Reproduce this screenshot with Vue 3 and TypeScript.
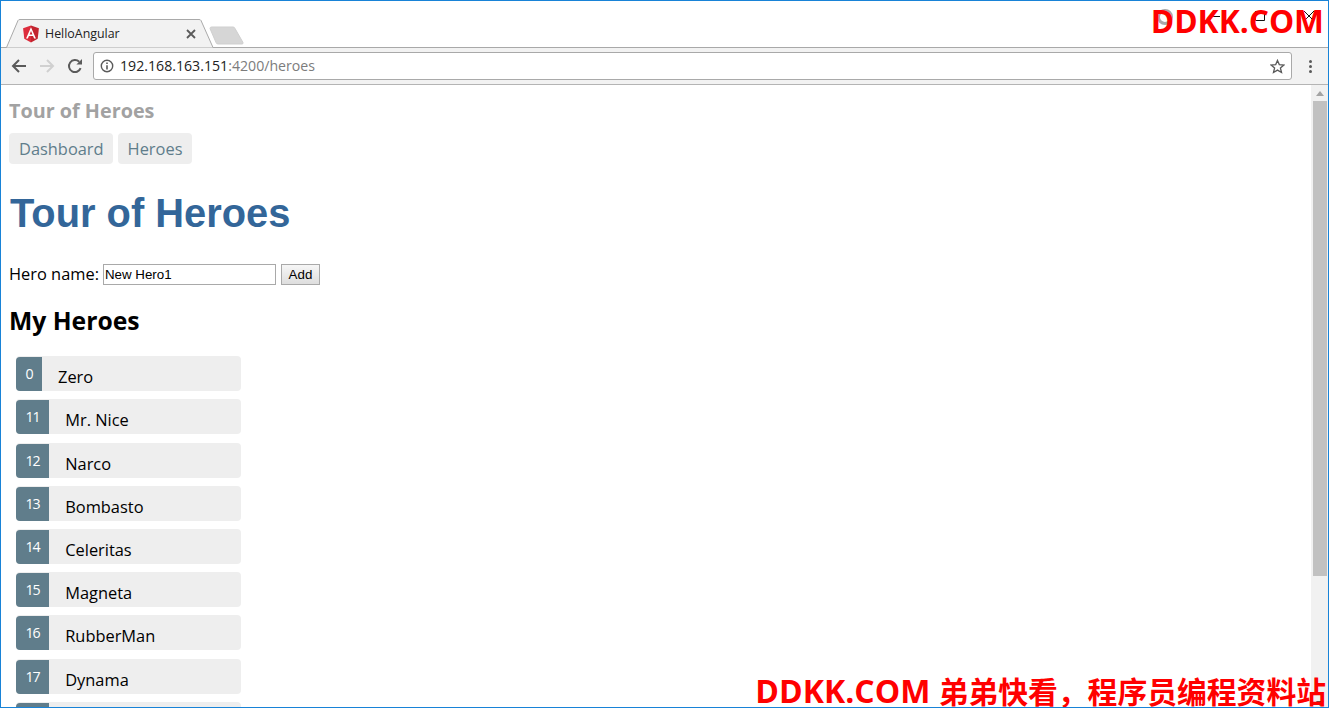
<template>
  <div class="window">
    <!-- tab strip -->
    <div class="tabstrip">
      <div class="tab">
        <svg class="tab-shape" width="208" height="29" viewBox="0 0 208 29">
          <path d="M0.5 28.5 L12 1.5 Q12.5 0.5 14 0.5 L193 0.5 Q194.5 0.5 195 1.5 L207 28.5" fill="#f2f2f2" stroke="#a9a9a9" />
        </svg>
        <svg class="favicon" width="16" height="18" viewBox="31 30 188 200">
          <polygon fill="#dd2c3c" points="125,30 31.9,63.2 46.1,186.3 125,230" />
          <polygon fill="#c3242f" points="125,30 218.1,63.2 203.9,186.3 125,230" />
          <path fill="#fff" d="M125 52.1L66.8 182.6h21.7l11.7-29.2h49.4l11.7 29.2h21.7L125 52.1zM142 135.4h-34l17-40.9 17 40.9z" />
        </svg>
        <span class="tab-title">HelloAngular</span>
        <svg class="tab-close" width="10" height="10" viewBox="0 0 10 10">
          <path d="M1 1L9 9M9 1L1 9" stroke="#5a5a5a" stroke-width="1.8" />
        </svg>
      </div>
      <svg class="new-tab" width="36" height="20" viewBox="0 0 36 20">
        <path d="M1 2.5Q1 1 2.5 1L24 1Q25.5 1 26 2.5L34 16.5Q34.5 18 33 18L9 18Q7.5 18 7 16.5Z" fill="#d6d6d6" stroke="#cfcfcf" />
      </svg>
      <div class="strip-fill">
        <svg class="win-ctl user" width="18" height="18" viewBox="0 0 18 18">
          <circle cx="9" cy="9" r="6.5" fill="none" stroke="#a8a8a8" stroke-width="3" />
        </svg>
        <svg class="win-ctl min" width="12" height="12" viewBox="0 0 12 12">
          <path d="M1 6.5H11" stroke="#111" />
        </svg>
        <svg class="win-ctl max" width="12" height="12" viewBox="0 0 12 12">
          <path d="M1.5 1.5H10.5V10.5H1.5Z" fill="none" stroke="#111" />
        </svg>
        <svg class="win-ctl close" width="12" height="12" viewBox="0 0 12 12">
          <path d="M1 1L11 11M11 1L1 11" stroke="#111" />
        </svg>
      </div>
    </div>

    <!-- toolbar -->
    <div class="toolbar">
      <svg class="tool" width="16" height="16" viewBox="0 0 16 16">
        <path d="M15 8H2M8 2L2 8L8 14" fill="none" stroke="#5a5a5a" stroke-width="2" />
      </svg>
      <svg class="tool" width="16" height="16" viewBox="0 0 16 16">
        <path d="M1 8H14M8 2L14 8L8 14" fill="none" stroke="#d0d0d0" stroke-width="2" />
      </svg>
      <svg class="tool" width="16" height="16" viewBox="0 0 16 16">
        <path d="M13.6 10.2A6 6 0 1 1 12.2 3.8" fill="none" stroke="#5a5a5a" stroke-width="2" />
        <path d="M9.4 6.6H15V1Z" fill="#5a5a5a" />
      </svg>
      <div class="omnibox">
        <svg width="14" height="14" viewBox="0 0 14 14">
          <circle cx="7" cy="7" r="5.7" fill="none" stroke="#5a5a5a" stroke-width="1.4" />
          <path d="M7 6.2V10.4M7 3.6V5" stroke="#5a5a5a" stroke-width="1.6" />
        </svg>
        <span class="url"><span class="host">192.168.163.151</span>:4200/heroes</span>
        <svg class="star" width="15" height="15" viewBox="0 0 15 15">
          <path d="M7.5 1.4L9.3 5.6L13.9 6L10.4 9L11.5 13.5L7.5 11.1L3.5 13.5L4.6 9L1.1 6L5.7 5.6Z" fill="none" stroke="#5a5a5a" stroke-width="1.3" />
        </svg>
      </div>
      <div class="kebab"><i></i><i></i><i></i></div>
    </div>

    <!-- page -->
    <div class="viewport">
      <div class="page">
        <h2 class="app-title">Tour of Heroes</h2>
        <nav class="nav">
          <a>Dashboard</a>
          <a>Heroes</a>
        </nav>
        <h1>Tour of Heroes</h1>
        <div class="add-row">
          <label>Hero name:</label>
          <input value="New Hero1" />
          <button>Add</button>
        </div>
        <h2 class="list-title">My Heroes</h2>
        <ul class="heroes">
          <li v-for="hero in heroes" :key="hero.id">
            <span class="badge">{{ hero.id }}</span>
            <span class="name">{{ hero.name }}</span>
          </li>
        </ul>
      </div>
      <div class="scrollbar">
        <span class="arrow up"></span>
        <div class="track"><div class="thumb"></div></div>
        <span class="arrow down"></span>
      </div>
    </div>

    <!-- watermarks sit over the screenshot -->
    <div class="mark mark-top">DDKK.COM</div>
    <div class="mark mark-bottom">DDKK.COM <span class="cjk">弟弟快看，程序员编程资料站</span></div>
  </div>
</template>

<script setup lang="ts">
interface Hero {
  id: number;
  name: string;
}

const heroes: Hero[] = [
  { id: 0, name: 'Zero' },
  { id: 11, name: 'Mr. Nice' },
  { id: 12, name: 'Narco' },
  { id: 13, name: 'Bombasto' },
  { id: 14, name: 'Celeritas' },
  { id: 15, name: 'Magneta' },
  { id: 16, name: 'RubberMan' },
  { id: 17, name: 'Dynama' },
  { id: 18, name: 'Dr IQ' },
];
</script>

<style>
html,
body {
  margin: 0;
  overflow: hidden;
}
</style>

<style scoped>
.window {
  position: relative;
  box-sizing: border-box;
  width: 1329px;
  height: 708px;
  border: 1px solid #1883d7;
  display: flex;
  flex-direction: column;
  overflow: hidden;
  background: #fff;
  font-family: "Open Sans", "Noto Sans", sans-serif;
}

.tabstrip {
  height: 47px;
  flex: none;
  display: flex;
  align-items: flex-end;
  box-sizing: border-box;
  padding-left: 5px;
  position: relative;
}

.tabstrip::after {
  content: "";
  position: absolute;
  left: 0;
  right: 0;
  bottom: 0;
  height: 1px;
  background: #a9a9a9;
}

.tab {
  position: relative;
  z-index: 1;
  width: 208px;
  height: 29px;
  display: flex;
  align-items: center;
  box-sizing: border-box;
  padding: 0 18px 0 17px;
  font-size: 12.4px;
  color: #222;
}

.tab-shape {
  position: absolute;
  left: 0;
  top: 0;
}

.favicon,
.tab-title,
.tab-close {
  position: relative;
}

.tab-title {
  margin-left: 6px;
  flex: 1;
}

.new-tab {
  margin: 0 0 2px -5px;
  flex: none;
}

.strip-fill {
  flex: 1;
  box-sizing: border-box;
  height: 100%;
  display: flex;
  justify-content: flex-end;
  align-items: flex-start;
  padding-top: 9px;
  padding-right: 13px;
}

.win-ctl {
  flex: none;
}

.win-ctl.user {
  margin: -2px 35px 0 0;
}

.win-ctl.min {
  margin-right: 33px;
}

.win-ctl.max {
  margin-right: 37px;
}

.toolbar {
  height: 37px;
  flex: none;
  box-sizing: border-box;
  background: #f2f2f2;
  border-bottom: 1px solid #b4b4b4;
  display: flex;
  align-items: center;
  padding: 0 0 0 10px;
}

.tool {
  flex: none;
  margin-right: 12px;
}

.omnibox {
  flex: none;
  width: 1199px;
  height: 28px;
  box-sizing: border-box;
  margin-left: -2px;
  background: #fff;
  border: 1px solid #a9a9a9;
  border-radius: 3px;
  display: flex;
  align-items: center;
  padding: 0 6px 0 6px;
}

.url {
  margin-left: 6px;
  padding-bottom: 2px;
  flex: 1;
  font-size: 14.15px;
  color: #7c7c7c;
}

.host {
  color: #222;
}

.kebab {
  width: 36px;
  display: flex;
  flex-direction: column;
  align-items: center;
  gap: 2px;
}

.kebab i {
  width: 3px;
  height: 3px;
  border-radius: 50%;
  background: #5a5a5a;
}

.viewport {
  flex: 1;
  min-height: 0;
  display: flex;
  overflow: hidden;
}

.page {
  flex: 1;
  min-width: 0;
  overflow: hidden;
  padding-left: 8px;
  color: #000;
}

.app-title {
  margin: 13px 0 0;
  font-size: 19.8px;
  line-height: 26px;
  font-weight: 700;
  color: #a2a2a2;
}

.nav {
  display: flex;
  gap: 5px;
  margin-top: 9px;
}

.nav a {
  height: 31px;
  line-height: 32px;
  padding: 0 10px;
  background: #eee;
  border-radius: 4px;
  font-size: 16.4px;
  color: #607d8b;
}

.nav a:first-child {
  padding-right: 9.4px;
}

.nav a:last-child {
  padding: 0 9.6px;
}

h1 {
  margin: 25px 0 0 1px;
  font-family: "Liberation Sans", Arial, sans-serif;
  font-size: 39.85px;
  line-height: 48px;
  font-weight: 700;
  color: #369;
}

.add-row {
  display: flex;
  align-items: center;
  height: 21px;
  margin-top: 27px;
  font-size: 16.4px;
}

.add-row label {
  margin-top: -2px;
}

.add-row input {
  width: 173px;
  height: 21px;
  box-sizing: border-box;
  margin: 0 0 0 4px;
  padding: 1px 1px;
  border: 1px solid #a9a9a9;
  font-family: "Liberation Sans", Arial, sans-serif;
  font-size: 13.33px;
  color: #000;
  background: #fff;
}

.add-row button {
  width: 39px;
  height: 21px;
  box-sizing: border-box;
  margin-left: 5px;
  padding: 0;
  border: 1px solid #a9a9a9;
  background: linear-gradient(#f6f6f6, #dedede);
  font-family: "Liberation Sans", Arial, sans-serif;
  font-size: 13.33px;
  color: #000;
}

.list-title {
  margin: 19px 0 0 0;
  font-size: 24.7px;
  line-height: 33px;
  font-weight: 700;
}

.heroes {
  list-style: none;
  margin: 19.3px 0 0 7px;
  padding: 0;
  width: 225px;
  display: flex;
  flex-direction: column;
  gap: 8.2px;
}

.heroes li {
  flex: none;
  height: 35px;
  background: #eee;
  border-radius: 4px;
  display: flex;
  font-size: 16.4px;
}

.badge {
  flex: none;
  box-sizing: border-box;
  height: 34px;
  margin-top: 1px;
  padding: 0 9.4px;
  background: #607d8b;
  border-radius: 4px 0 0 4px;
  color: #fff;
  font-size: 14.2px;
  letter-spacing: -0.9px;
  line-height: 33px;
}

.name {
  margin-left: 16px;
  line-height: 42px;
  height: 35px;
  color: #000;
}

.scrollbar {
  flex: none;
  width: 17px;
  background: #f1f1f1;
  display: flex;
  flex-direction: column;
  align-items: center;
}

.arrow {
  flex: none;
  width: 0;
  height: 0;
  border-left: 4px solid transparent;
  border-right: 4px solid transparent;
}

.arrow.up {
  margin: 6px 0 5px;
  border-bottom: 5px solid #a3a3a3;
}

.arrow.down {
  margin: 5px 0 1px;
  border-top: 5px solid #505050;
}

.track {
  flex: 1;
  width: 100%;
  display: flex;
  justify-content: center;
}

.thumb {
  width: 14px;
  height: 475px;
  background: #c1c1c1;
}

.mark {
  position: absolute;
  z-index: 5;
  font-family: "Open Sans", "Noto Sans CJK SC", sans-serif;
  font-weight: 700;
  color: #ff0000;
  white-space: nowrap;
}

.mark-top {
  right: 4px;
  top: 0;
  font-size: 31.7px;
  line-height: 40px;
}

.mark-bottom {
  right: 2px;
  bottom: 0;
  font-size: 32px;
  line-height: 30px;
}

.mark-bottom .cjk {
  font-size: 29.8px;
}
</style>
